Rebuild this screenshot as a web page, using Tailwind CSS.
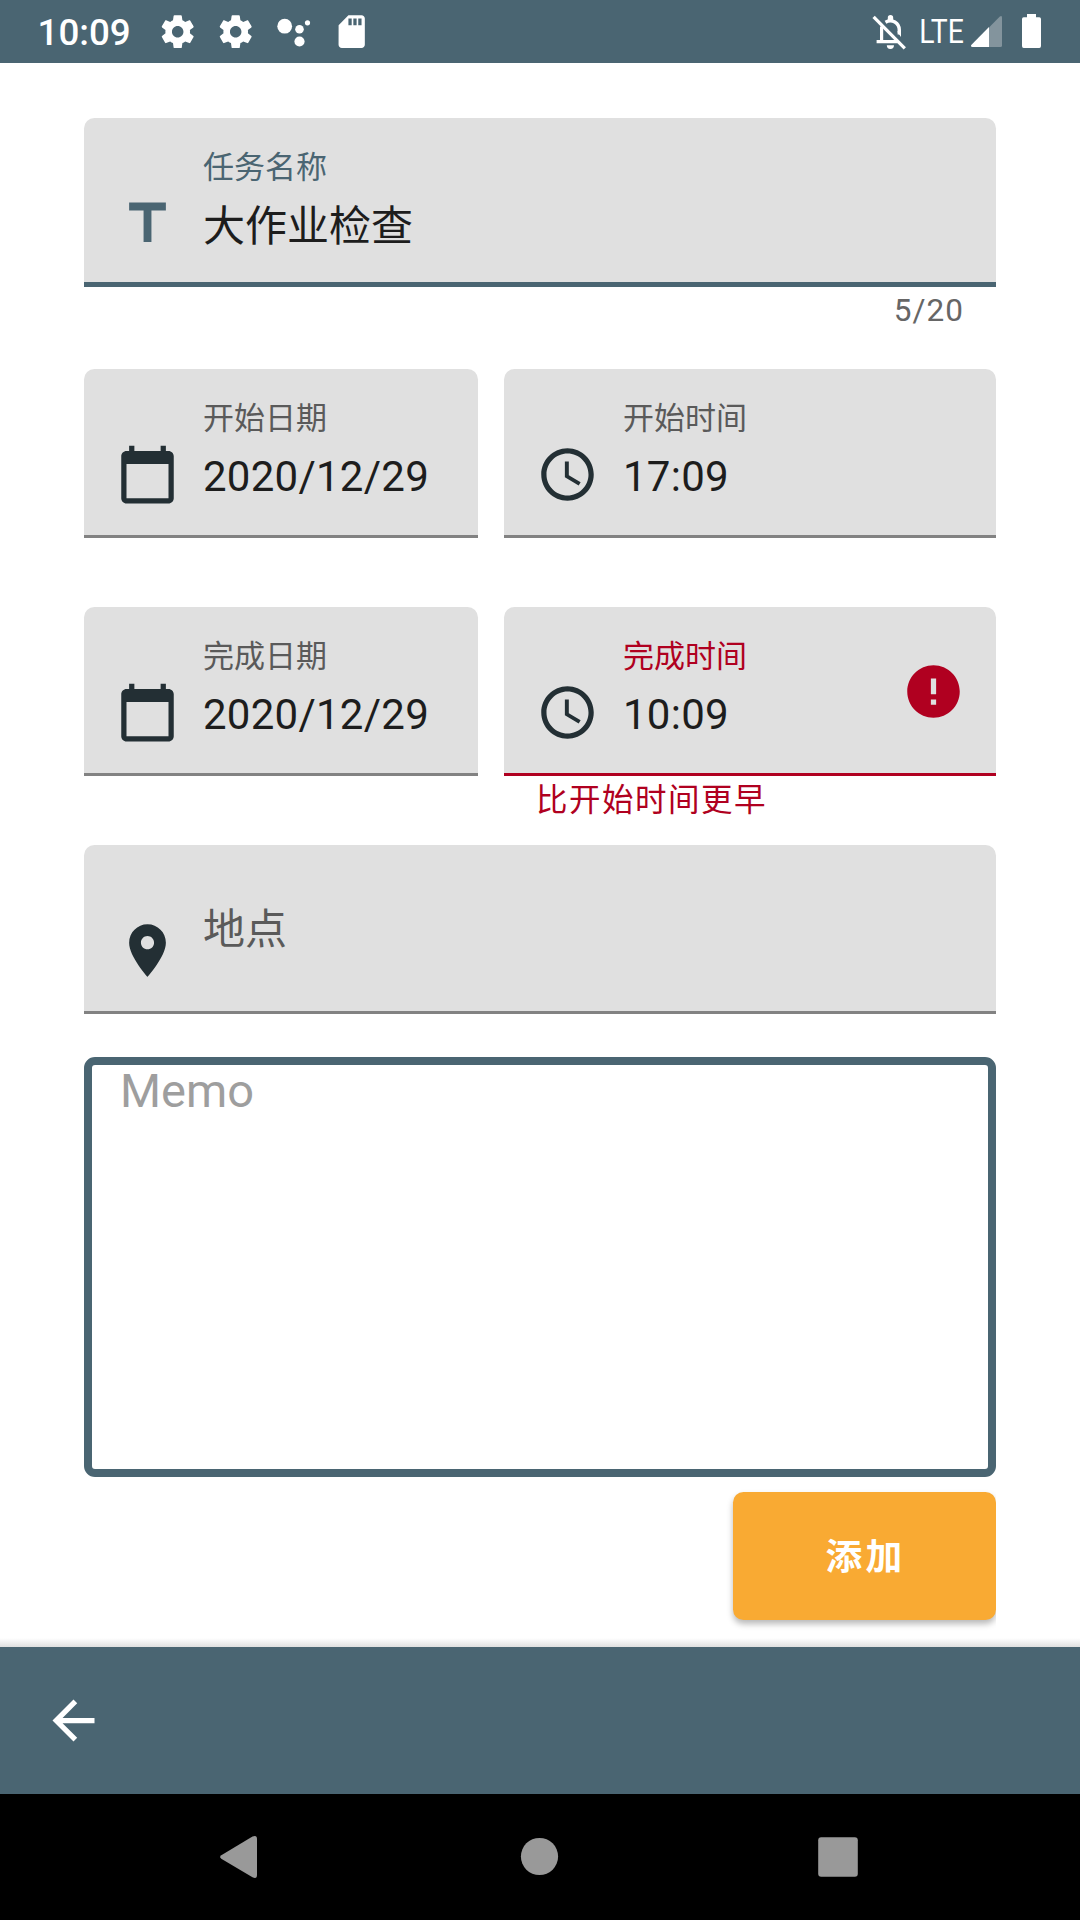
<!DOCTYPE html>
<html lang="zh-CN">
<head>
<meta charset="utf-8">
<title>任务</title>
<script src="https://cdn.jsdelivr.net/npm/@tailwindcss/browser@4"></script>
</head>
<body class="flex h-[1920px] w-[1080px] flex-col overflow-hidden bg-white font-[Roboto,'Noto_Sans_CJK_SC',sans-serif] text-[#1d1d1d]">
<svg class="hidden">
  <symbol id="gear" viewBox="0 0 24 24"><path d="M19.43 12.98c.04-.32.07-.64.07-.98s-.03-.66-.07-.98l2.11-1.65c.19-.15.24-.42.12-.64l-2-3.46c-.12-.22-.39-.3-.61-.22l-2.49 1c-.52-.4-1.08-.73-1.69-.98l-.38-2.65C14.46 2.18 14.25 2 14 2h-4c-.25 0-.46.18-.49.42l-.38 2.65c-.61.25-1.17.59-1.69.98l-2.49-1c-.23-.09-.49 0-.61.22l-2 3.46c-.13.22-.07.49.12.64l2.11 1.65c-.04.32-.07.65-.07.98s.03.66.07.98l-2.11 1.65c-.19.15-.24.42-.12.64l2 3.46c.12.22.39.3.61.22l2.49-1c.52.4 1.08.73 1.69.98l.38 2.65c.03.24.24.42.49.42h4c.25 0 .46-.18.49-.42l.38-2.65c.61-.25 1.17-.59 1.69-.98l2.49 1c.23.09.49 0 .61-.22l2-3.46c.12-.22.07-.49-.12-.64l-2.11-1.65zM12 15.5c-1.93 0-3.5-1.57-3.5-3.5s1.57-3.5 3.5-3.5 3.5 1.57 3.5 3.5-1.57 3.5-3.5 3.5z"/></symbol>
  <symbol id="calendar" viewBox="0 0 24 24"><path d="M20 3h-1V1h-2v2H7V1H5v2H4c-1.1 0-2 .9-2 2v16c0 1.1.9 2 2 2h16c1.1 0 2-.9 2-2V5c0-1.1-.9-2-2-2zm0 18H4V8h16v13z"/></symbol>
  <symbol id="clock" viewBox="0 0 24 24"><path d="M11.99 2C6.47 2 2 6.48 2 12s4.47 10 9.99 10C17.52 22 22 17.52 22 12S17.52 2 11.99 2zM12 20c-4.42 0-8-3.58-8-8s3.58-8 8-8 8 3.58 8 8-3.58 8-8 8zM12.5 7H11v6l5.25 3.15.75-1.23-4.5-2.67z"/></symbol>
</svg>

<header class="flex h-[63px] shrink-0 items-center justify-between bg-[#4a6572] text-white">
  <div class="flex h-full items-center pl-[37.5px]">
    <span class="w-[120.5px] pt-[3px] text-[36.75px] leading-[62px] font-medium">10:09</span>
    <div class="flex gap-[18.6px] fill-white">
      <svg class="size-[39.4px]"><use href="#gear"/></svg>
      <svg class="size-[39.4px]"><use href="#gear"/></svg>
      <svg class="size-[39.4px]" viewBox="274.3 11.8 39.4 39.4"><circle cx="285" cy="26" r="7.4"/><circle cx="299.8" cy="29.1" r="4.3"/><circle cx="307.8" cy="22.6" r="2.6"/><circle cx="299.8" cy="41.3" r="5.1"/></svg>
      <svg class="size-[39.4px]" viewBox="0 0 24 24"><path d="M18 2h-8L4.02 8 4 20c0 1.1.9 2 2 2h12c1.1 0 2-.9 2-2V4c0-1.1-.9-2-2-2zm-6 6h-2V4h2v4zm3 0h-2V4h2v4zm3 0h-2V4h2v4z"/></svg>
    </div>
  </div>
  <svg class="h-[63px] w-[220px]" viewBox="860 0 220 63">
    <g fill="none" stroke="#fff" stroke-width="3.2">
      <path d="M873.6 16.8 904.8 48.4"/>
      <path d="M881.6 26.5V41.5M876.6 41.7H897.5"/>
      <path d="M885.5 22.2C892 18.5 899.3 23 899.3 30V34.5" stroke-width="3.4"/>
    </g>
    <path fill="#fff" d="M887.8 20v-2.2a2.7 2.7 0 0 1 5.4 0V20zM886.8 45.3h7.2a3.6 3.6 0 0 1-7.2 0zM897 31.5h4V37z"/>
    <text x="919.3" y="42.5" fill="#fff" font-size="32.5" textLength="44.5" lengthAdjust="spacingAndGlyphs">LTE</text>
    <path fill="#83949d" d="M989 27.5 999.6 16.7Q1002 14.8 1002 17.5V45.5Q1002 47 1000.5 47H989z"/>
    <path fill="#fff" d="M989 27V47H972.5Q970 46.5 971.5 44.7z"/>
    <path fill="#fff" d="M1027 14h9v3.3h3.3q1.7 0 1.7 1.7V46q0 2-1.7 2H1023.7q-1.7 0-1.7-2V19q0-1.7 1.7-1.7h3.3z"/>
  </svg>
</header>

<main class="flex flex-1 flex-col px-[84px] pt-[55px]">
  <section class="flex h-[169px] rounded-t-[10.5px] border-b-[5px] border-[#4a6572] bg-[#e0e0e0] pl-[31.5px]">
    <svg class="mt-[73.6px] size-[63px] fill-[#4a6572]" viewBox="0 0 24 24"><path d="M5 4v3h5.5v12h3V7H19V4z"/></svg>
    <div class="ml-[24.5px] pt-[27px]">
      <div class="text-[31px] leading-[46px] text-[#4a6572]">任务名称</div>
      <div class="mt-[5px] text-[42px] leading-[62px]">大作业检查</div>
    </div>
  </section>
  <div class="h-[82px] pt-[5px] pr-[32px] text-right text-[31.5px] leading-[38px] tracking-[1.05px] text-[#666]">5/20</div>

  <div class="flex h-[238px] gap-[26px]">
    <section class="flex h-[169px] w-[394px] rounded-t-[10.5px] border-b-[3px] border-[#828282] bg-[#e0e0e0] pl-[31.5px]">
      <svg class="mt-[73.6px] size-[63px] fill-[#232f34]"><use href="#calendar"/></svg>
      <div class="ml-[24.5px] pt-[27px]">
        <div class="text-[31px] leading-[46px] text-[#5a5a5a]">开始日期</div>
        <div class="mt-1 text-[42px] leading-[62px] tracking-[0.25px]">2020/12/29</div>
      </div>
    </section>
    <section class="flex h-[169px] w-[492px] rounded-t-[10.5px] border-b-[3px] border-[#828282] bg-[#e0e0e0] pl-[31.5px]">
      <svg class="mt-[73.6px] size-[63px] fill-[#232f34]"><use href="#clock"/></svg>
      <div class="ml-[24.5px] pt-[27px]">
        <div class="text-[31px] leading-[46px] text-[#5a5a5a]">开始时间</div>
        <div class="mt-1 text-[42px] leading-[62px] tracking-[0.25px]">17:09</div>
      </div>
    </section>
  </div>

  <div class="flex h-[238px] gap-[26px]">
    <section class="flex h-[169px] w-[394px] rounded-t-[10.5px] border-b-[3px] border-[#828282] bg-[#e0e0e0] pl-[31.5px]">
      <svg class="mt-[73.6px] size-[63px] fill-[#232f34]"><use href="#calendar"/></svg>
      <div class="ml-[24.5px] pt-[27px]">
        <div class="text-[31px] leading-[46px] text-[#5a5a5a]">完成日期</div>
        <div class="mt-1 text-[42px] leading-[62px] tracking-[0.25px]">2020/12/29</div>
      </div>
    </section>
    <div class="w-[492px]">
      <section class="flex h-[169px] rounded-t-[10.5px] border-b-[3px] border-[#b00020] bg-[#e0e0e0] pr-[31.5px] pl-[31.5px]">
        <svg class="mt-[73.6px] size-[63px] fill-[#232f34]"><use href="#clock"/></svg>
        <div class="ml-[24.5px] flex-1 pt-[27px]">
          <div class="text-[31px] leading-[46px] text-[#b00020]">完成时间</div>
          <div class="mt-1 text-[42px] leading-[62px] tracking-[0.25px]">10:09</div>
        </div>
        <svg class="mt-[53px] size-[63px] fill-[#b00020]" viewBox="0 0 24 24"><path d="M12 2C6.48 2 2 6.48 2 12s4.48 10 10 10 10-4.48 10-10S17.52 2 12 2zm1 15h-2v-2h2v2zm0-4h-2V7h2v6z"/></svg>
      </section>
      <div class="pt-[2px] pl-[32px] text-[31.5px] leading-[46px] tracking-[1.5px] text-[#b00020]">比开始时间更早</div>
    </div>
  </div>

  <section class="flex h-[169px] rounded-t-[10.5px] border-b-[3px] border-[#828282] bg-[#e0e0e0] pl-[31.5px]">
    <svg class="mt-[73.6px] size-[63px] fill-[#232f34]" viewBox="0 0 24 24"><path d="M12 2C8.13 2 5 5.13 5 9c0 5.25 7 13 7 13s7-7.75 7-13c0-3.87-3.13-7-7-7zm0 9.5c-1.38 0-2.5-1.12-2.5-2.5s1.12-2.5 2.5-2.5 2.5 1.12 2.5 2.5-1.12 2.5-2.5 2.5z"/></svg>
    <div class="ml-[24.5px] pt-[54px] text-[42px] leading-[62px] text-[#5a5a5a]">地点</div>
  </section>

  <section class="mt-[43px] h-[420px] rounded-[11px] border-8 border-[#4a6572] pl-[28px] text-[47px] leading-[52px] text-[#9e9e9e]">Memo</section>

  <div class="mt-[15px] -mb-4 flex h-[146px] items-start justify-end overflow-x-clip">
    <button class="h-[128px] w-[263px] rounded-[10.5px] bg-[#f9aa33] pt-1 pl-[2px] text-[36.75px] leading-[54px] font-bold tracking-[3.28px] text-white shadow-[0_4px_6px_rgba(0,0,0,0.28)]">添加</button>
  </div>
</main>

<div class="h-[9px] shrink-0 bg-linear-to-b from-white to-[#e0e0e0]"></div>
<nav class="flex h-[147px] shrink-0 bg-[#4a6572] pt-[42px] pl-[42.3px]">
  <svg class="size-[63px] fill-white" viewBox="0 0 24 24"><path d="M20 11H7.83l5.59-5.59L12 4l-8 8 8 8 1.41-1.41L7.83 13H20v-2z"/></svg>
</nav>
<footer class="h-[126px] shrink-0 bg-black">
  <svg class="h-[126px] w-[1080px] fill-[#999]" viewBox="0 1794 1080 126">
    <path d="M221.3 1855.2 252.5 1836.6Q257 1834.8 257 1839V1875Q257 1879.5 252.5 1877.3L221.3 1858.7Q218.8 1857 221.3 1855.2z"/>
    <circle cx="539.5" cy="1856.5" r="18.6"/>
    <rect x="818.2" y="1837.2" width="39.6" height="39.6" rx="3"/>
  </svg>
</footer>
</body>
</html>
